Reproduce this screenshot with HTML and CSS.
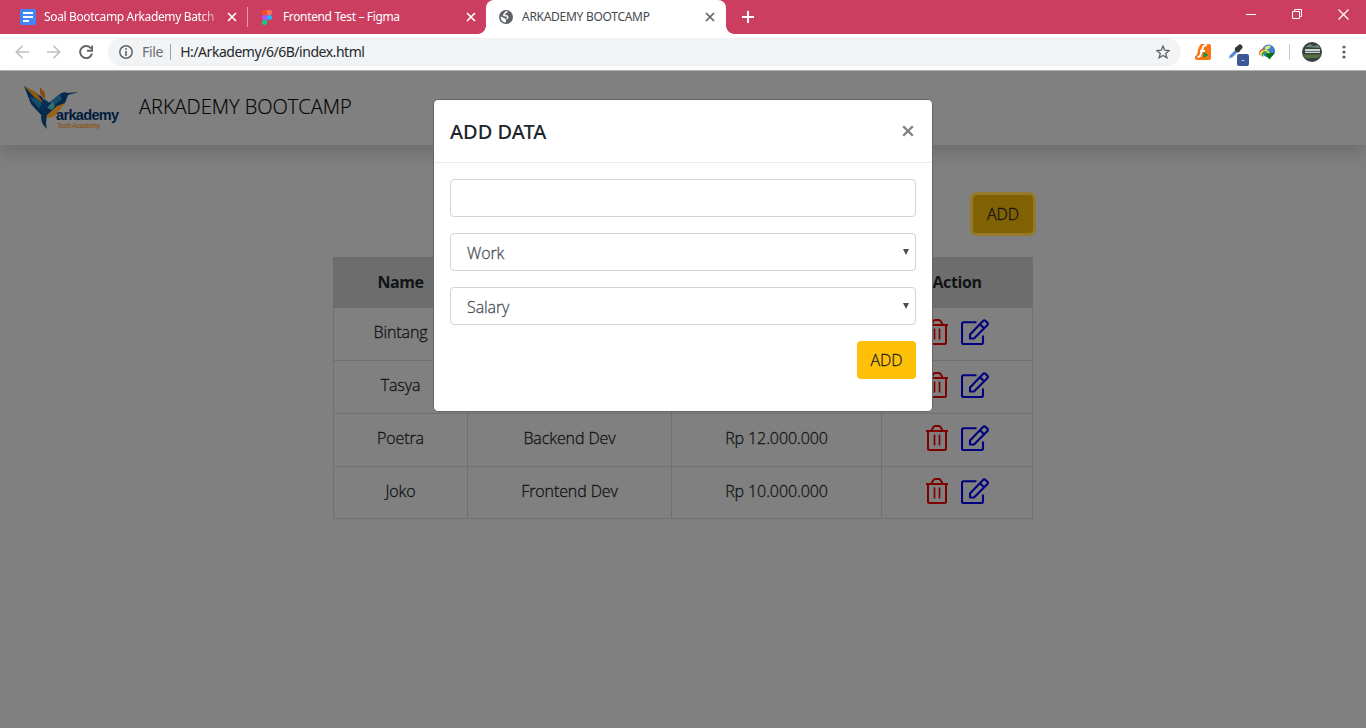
FILE: index.html
```html
<!DOCTYPE html>
<html lang="en">
<head>
<meta charset="utf-8">
<title>ARKADEMY BOOTCAMP</title>
<link rel="stylesheet" href="styles.css">
</head>
<body>
<svg class="defs" width="0" height="0">
  <symbol id="trash" viewBox="0 0 22 26"><g fill="none" stroke="currentColor" stroke-width="2"><path d="M0 6h22M5.500 5.500l1.800-3.300Q8 1 9 1h4q1 0 1.700 1.200l1.800 3.300M2 6v17.500Q2 25 3.500 25h15q1.500 0 1.500-1.500V6"/><path stroke-width="1.700" d="M8.500 9.500v11M13.500 9.500v11"/></g></symbol>
  <symbol id="edit" viewBox="0 0 28 26"><g fill="none" stroke="currentColor" stroke-width="2.100" stroke-linejoin="round"><path d="M15.500 3.200H2.500Q1 3.200 1 4.700v18.800Q1 25 2.500 25h18q1.500 0 1.500-1.500V16.500"/><path d="M9 19.500v-4L22 2q1.300-1.300 2.600 0l1.600 1.600q1.300 1.300 0 2.600L13 19.500zM19 5.200l4 4"/></g></symbol>
  <symbol id="figma" viewBox="0 0 10 15"><path fill="#f24e1e" d="M5 0H2.500a2.500 2.500 0 0 0 0 5H5z"/><path fill="#ff7262" d="M5 0h2.500a2.500 2.500 0 0 1 0 5H5z"/><path fill="#a259ff" d="M5 5H2.500a2.500 2.500 0 0 0 0 5H5z"/><circle cx="7.500" cy="7.500" r="2.500" fill="#1abcfe"/><path fill="#0acf83" d="M5 10H2.500A2.500 2.500 0 1 0 5 12.500z"/></symbol>
  <symbol id="cross" viewBox="0 0 10 10"><path d="M1 1l8 8M9 1L1 9" stroke="currentColor" stroke-width="1.700"/></symbol>
</svg>
<div class="tabs">
  <div class="tab tab-docs">
    <svg width="16" height="16"><rect width="16" height="16" rx="1.500" fill="#4285f4"/><path d="M3 4h10M3 8h10M3 12h6" stroke="#fff" stroke-width="2"/></svg>
    <span class="tab-title faded">Soal Bootcamp Arkademy Batch</span>
    <svg class="x" width="10" height="10"><use href="#cross"/></svg>
  </div>
  <i class="tab-line"></i>
  <div class="tab tab-figma">
    <svg width="10" height="15"><use href="#figma"/></svg>
    <span class="tab-title">Frontend Test – Figma</span>
    <svg class="x" width="10" height="10"><use href="#cross"/></svg>
  </div>
  <div class="tab tab-active">
    <svg width="14" height="14" viewBox="0 0 14 14"><circle cx="7" cy="7" r="7" fill="#5f6368"/><path d="M8.500 1.800Q5.800 2 6 3.600L4.600 4.800Q4.800 6 7 5.800q2.200.2 1.700 2l-1.200.9" fill="none" stroke="#fff" stroke-width="1.400"/><path d="M1.500 6.500l4.200 1.800 1.600 1.900-.7 2.400Q2 12 1.500 6.500z" fill="#fff"/></svg>
    <span class="tab-title">ARKADEMY BOOTCAMP</span>
    <svg class="x" width="10" height="10"><use href="#cross"/></svg>
  </div>
  <svg class="plus" width="12" height="12"><path d="M6 0v12M0 6h12" stroke="#fff" stroke-width="2"/></svg>
  <div class="window-buttons">
    <svg width="10" height="10"><path d="M0 5.500h10" stroke="#fff"/></svg>
    <svg width="10" height="10"><path d="M.5 2.500h7v7h-7zM2.500 2.500v-2h7v7h-2" fill="none" stroke="#fff"/></svg>
    <svg width="11" height="11"><path d="M.5.5l10 10M10.500.5l-10 10" stroke="#fff" stroke-width="1.200"/></svg>
  </div>
</div>
<div class="toolbar">
  <svg class="nav off" width="14" height="14"><path d="M14 7H1.500M7.500.8L1.300 7l6.200 6.200" /></svg>
  <svg class="nav off" width="14" height="14"><path d="M0 7h12.500M6.500.8L12.700 7l-6.200 6.200"/></svg>
  <svg class="nav" width="14" height="14"><path d="M12 3.500A6 6 0 1 0 13 8.500M13.200.5v5.300H8" /></svg>
  <div class="address">
    <svg width="14" height="14"><circle cx="7" cy="7" r="6.200" fill="none" stroke="#5f6368" stroke-width="1.500"/><path d="M7 3v1.700M7 6v5" stroke="#5f6368" stroke-width="1.600"/></svg>
    <span class="scheme">File</span><span class="url">H:/Arkademy/6/6B/index.html</span>
    <svg class="star" width="14" height="14" viewBox="0 0 14 14"><path d="M7 1l1.700 4.200 4.500.3-3.500 2.900 1.200 4.400L7 10.400l-3.900 2.400 1.200-4.400L.8 5.500l4.500-.3z" fill="none" stroke="#5f6368" stroke-width="1.300"/></svg>
  </div>
  <div class="extensions">
    <svg width="16" height="16"><rect width="16" height="16" rx="2" fill="#fa7414"/><path d="M0 0h6Q3 3 2.500 9L1 12H0z" fill="#fff"/><path d="M12 1Q8 1 7.500 5L5.500 11Q5 13 2.500 13M5 7h5" fill="none" stroke="#fff" stroke-width="2"/><path d="M8.500 8l5 3-5 3z" fill="#15914b"/></svg>
    <span class="picker"><svg width="16" height="16"><path d="M2 14l1-2.500 6-6 2 2-6 6z" fill="#3f7fda" stroke="#a9b6c8"/><path d="M8.500 3.500l4 4" stroke="#383838" stroke-width="2.500"/><path d="M10.500 5.500l2.500-2.500" stroke="#383838" stroke-width="5" stroke-linecap="round"/></svg><b>-</b></span>
    <svg width="16" height="16"><circle cx="9.500" cy="7" r="6.500" fill="#3f7fc8"/><path d="M6 3q3-2.500 6-1l-2 3-4 1z" fill="#d9ea76"/><path d="M1 11Q0 5.500 5 5.500" fill="none" stroke="#dd4d21" stroke-width="1.300"/><path d="M2 12Q1.500 6.500 6 6.500q3 0 4 3" fill="none" stroke="#f9eb32" stroke-width="1.500"/><path d="M3.500 12.500Q3 8 6 8l4 3" fill="none" stroke="#35a548" stroke-width="1.600"/><path d="M6 10l10-1.500-5.500 7z" fill="#07710b"/></svg>
    <i class="ext-line"></i>
    <svg class="avatar" width="20" height="20"><circle cx="10" cy="10" r="10" fill="#34413c"/><path d="M1 12.500h18Q17 17 12 16l-8 .5Q2 15 1 12.500z" fill="#567040"/><path d="M3 7h15v4H3z" fill="#cfd4d1"/><path d="M3 5l5-3 3 2 5-1 2 3z" fill="#71807b"/><path d="M3 9.500h15" stroke="#66726c"/></svg>
    <svg width="4" height="14"><g fill="#5f6368"><circle cx="2" cy="2" r="1.600"/><circle cx="2" cy="7" r="1.600"/><circle cx="2" cy="12" r="1.600"/></g></svg>
  </div>
</div>
<div class="page">
  <header class="site-header">
    <svg class="logo" width="104" height="50" viewBox="0 0 104 50">
      <path d="M4 5l18 11 5 10-5 9-11-12z" fill="#05294c"/><path d="M4 5l12 6 8 12-10-7z" fill="#8a5a12"/><path d="M20 6l5 6v7l-5-6z" fill="#8a4a12"/><path d="M9 16l9 2 7 9-5 2z" fill="#154d6a"/><path d="M24 18l6 4-5 11-6-5z" fill="#082f55"/><path d="M29 22L40 13q3-3 8-1l11-1-11 3-3 8-6 4-6 7-6 4q-2 4 0 11-6-5-6-12l2-5z" fill="#06294c"/><path d="M30 21l10-8 2 5-6 5z" fill="#154d6a"/><path d="M27 27l6-7 2 5-3 4z" fill="#2c746d"/><path d="M45 22l-8 3-10 9-1 4 9-3z" fill="#96651b"/>
      <text x="36" y="39" class="logo-name" textLength="63">arkademy</text><text x="37" y="47" class="logo-tag" textLength="43">Tech Academy</text>
    </svg>
    <span class="brand">ARKADEMY BOOTCAMP</span>
  </header>
  <main class="content">
    <div class="actions"><button class="btn btn-focus">ADD</button></div>
    <table class="data">
      <thead><tr><th class="c-name">Name</th><th class="c-work">Work</th><th class="c-salary">Salary</th><th class="c-action">Action</th></tr></thead>
      <tbody>
        <tr><td>Bintang</td><td>Frontend Dev</td><td>Rp 12.000.000</td><td><div class="icons"><svg class="trash"><use href="#trash"/></svg><svg class="edit"><use href="#edit"/></svg></div></td></tr>
        <tr><td>Tasya</td><td>Backend Dev</td><td>Rp 10.000.000</td><td><div class="icons"><svg class="trash"><use href="#trash"/></svg><svg class="edit"><use href="#edit"/></svg></div></td></tr>
        <tr><td>Poetra</td><td>Backend Dev</td><td>Rp 12.000.000</td><td><div class="icons"><svg class="trash"><use href="#trash"/></svg><svg class="edit"><use href="#edit"/></svg></div></td></tr>
        <tr><td>Joko</td><td>Frontend Dev</td><td>Rp 10.000.000</td><td><div class="icons"><svg class="trash"><use href="#trash"/></svg><svg class="edit"><use href="#edit"/></svg></div></td></tr>
      </tbody>
    </table>
  </main>
  <div class="modal">
    <div class="modal-header"><h5>ADD DATA</h5><svg class="close" width="12" height="12" viewBox="0 0 12 12"><path d="M1.200 1.200l9.600 9.600M10.800 1.200l-9.600 9.600" stroke="#7f7f7f" stroke-width="2.300"/></svg></div>
    <div class="modal-body">
      <div class="field"></div>
      <div class="field"><span>Work</span><i class="arrow"></i></div>
      <div class="field"><span>Salary</span><i class="arrow"></i></div>
      <button class="btn btn-submit">ADD</button>
    </div>
  </div>
</div>
</body>
</html>
```
FILE: styles.css
```css
* { box-sizing: border-box; }
body { margin: 0; width: 1366px; height: 728px; overflow: hidden; display: flex; flex-direction: column; font: 300 16px/24px "Open Sans", "Noto Sans", sans-serif; letter-spacing: -.1px; color: #212529; }
svg { display: block; flex: none; }
.defs { position: absolute; }

.tabs { flex: none; height: 34px; background: #cb3e60; display: flex; align-items: center; font: 12px/16px "Noto Sans", sans-serif; letter-spacing: -.36px; color: #fff; }
.tab { height: 34px; display: flex; align-items: center; }
.tab .x { margin-left: auto; }
.tab-title { white-space: nowrap; }
.tab-docs { width: 237px; padding-left: 20px; gap: 8px; }
.faded { width: 175px; mask-image: linear-gradient(90deg, #000 155px, rgba(0,0,0,.4) 172px); }
.tab-line { width: 1px; height: 20px; margin-left: 10px; background: #e29aad; }
.tab-figma { width: 238px; padding: 0 10px 0 14px; gap: 11px; }
.tab-active { position: relative; width: 240px; padding: 0 11px 0 13px; gap: 9px; background: #fff; border-radius: 8px 8px 0 0; color: #45494d; letter-spacing: -.28px; }
.tab-active .x { color: #5f6368; }
.tab-active::before, .tab-active::after { content: ""; position: absolute; bottom: 0; width: 8px; height: 8px; }
.tab-active::before { left: -8px; background: radial-gradient(circle at 0 0, transparent 7.5px, #fff 8px); }
.tab-active::after { right: -8px; background: radial-gradient(circle at 100% 0, transparent 7.5px, #fff 8px); }
.plus { margin-left: 16px; }
.window-buttons { margin: -6px 17px 0 auto; display: flex; gap: 36px; align-items: center; }

.toolbar { flex: none; height: 37px; border-bottom: 1px solid #b5b5b5; background: #fff; display: flex; align-items: center; gap: 18px; padding-left: 15px; }
.nav path { fill: none; stroke: #5f6368; stroke-width: 1.9; }
.off path { stroke: #bcbec1; stroke-width: 1.6; }
.address { width: 1073px; height: 28px; margin-left: -3px; border-radius: 14px; background: #f1f3f4; display: flex; align-items: center; padding: 0 11px; font: 14px/20px "Noto Sans", sans-serif; letter-spacing: -.47px; }
.scheme { margin-left: 9px; padding-right: 7px; border-right: 1px solid #9da0a4; line-height: 16px; letter-spacing: -.3px; color: #6b6f73; }
.url { margin-left: 9px; color: #25282b; }
.star { margin-left: auto; }
.extensions { display: flex; align-items: center; gap: 16px; margin-left: -4px; }
.picker { position: relative; }
.picker b { position: absolute; left: 10px; top: 10px; width: 12px; height: 12px; border-radius: 2px; background: #3b5998; color: #fff; font-size: 9px; line-height: 11px; text-align: center; }
.ext-line { width: 1px; height: 16px; background: #c7c9cb; margin: 0 -4px 0 -2px; }
.avatar { margin-right: 4px; }

.page { flex: 1; position: relative; background: #808080; color: #121315; }
.site-header { height: 74px; box-shadow: 0 8px 16px rgba(0,0,0,.15); display: flex; align-items: flex-start; padding: 11px 20px; }
.brand { margin: 10px 0 0 15px; font-size: 20px; font-weight: 300; line-height: 30px; letter-spacing: 0; color: #050506; -webkit-text-stroke: .2px currentColor; }
.logo { margin-top: -1px; }
.logo-name { font: bold 14.5px "Liberation Sans", sans-serif; fill: #001b3e; }
.logo-tag { font: 7px "Liberation Sans", sans-serif; fill: #8c561b; stroke: #8c561b; stroke-width: .2px; }
.content { width: 700px; margin: 50px 0 0 333px; }
.actions { display: flex; justify-content: flex-end; }
.btn { width: 59px; height: 38px; padding: 0; border: 0; border-radius: 4px; background: #ffc107; color: #212529; font: 300 16px/24px "Open Sans", sans-serif; -webkit-text-stroke: .3px currentColor; }
.btn-focus { width: 60px; background: #806104; color: #121315; box-shadow: 0 0 0 3px #967a2c; }
.data { width: 700px; margin-top: 24px; border-collapse: collapse; table-layout: fixed; text-align: center; }
.data th, .data td { border: 1px solid #6f7071; padding: 0 0 2px; }
.data th { height: 50px; background: #6d6d6d; border-color: #6d6d6d; font-weight: 700; letter-spacing: -.4px; }
.data td { height: 53px; padding-bottom: 4px; -webkit-text-stroke: .3px currentColor; }
.data tr:last-child td { height: 52px; }
.c-name { width: 134px; }
.c-work { width: 204px; }
.c-salary { width: 210px; }
.icons { display: flex; justify-content: center; gap: 13px; }
.trash { width: 22px; height: 26px; color: #800000; }
.edit { width: 28px; height: 26px; color: #000080; }

.modal { position: absolute; left: 433px; top: 28px; width: 500px; height: 313px; border: 1px solid #666; border-radius: 5px; background: #fff; color: #212529; }
.modal-header { height: 63px; border-bottom: 1px solid #e9ecef; padding: 0 18px 0 16px; display: flex; align-items: center; justify-content: space-between; }
h5 { margin: 2px 0 0; font: 500 20px/30px "Noto Sans", sans-serif; letter-spacing: 0; }
.modal-body { padding: 16px; display: flex; flex-direction: column; gap: 16px; }
.field { height: 38px; border: 1px solid #ced4da; border-radius: 4px; padding: 2px 6px 0 16px; display: flex; align-items: center; justify-content: space-between; color: #495057; -webkit-text-stroke: .3px currentColor; }
.arrow { margin-top: -2px; border: 3.5px solid transparent; border-top: 6px solid #495057; border-bottom: 0; }
.btn-submit { align-self: flex-end; }
```
